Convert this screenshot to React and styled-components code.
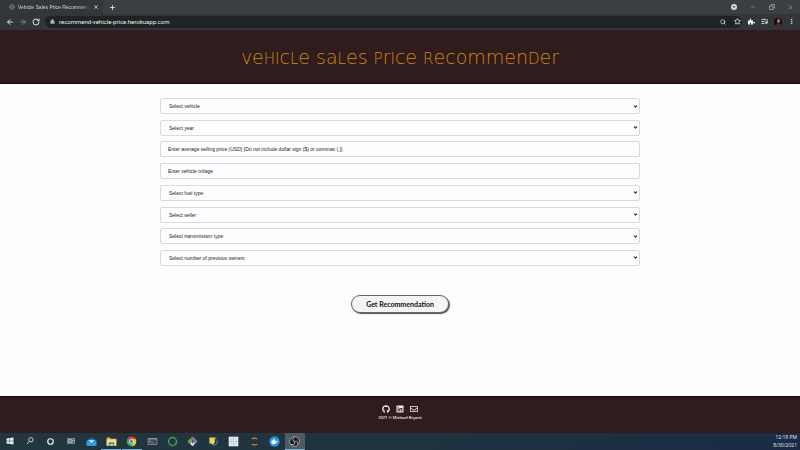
import React from "react";
import styled, { createGlobalStyle } from "styled-components";
import {
  ArrowLeft, ArrowRight, RotateCw, Lock, X, Plus, Globe, Search, Star,
  EllipsisVertical, Minus, ChevronDown, ListMusic,
} from "lucide-react";
import { FaGithub, FaLinkedin, FaRegEnvelope, FaWindows, FaPuzzlePiece } from "react-icons/fa";

const GlobalStyle = createGlobalStyle`
  * { box-sizing: border-box; }
  body { margin: 0; background: #fefdfe; font-family: "Liberation Sans", Arial, sans-serif; }
  button, input, select { font: inherit; margin: 0; }
  svg { flex-shrink: 0; }
`;

const Page = styled.div`
  min-height: 100vh;
  display: flex;
  flex-direction: column;
`;

const TabStrip = styled.div`
  height: 14px;
  display: flex;
  align-items: stretch;
  background: #3b3f43;
  color: #d4d6d8;
`;

const Tab = styled.div`
  width: 103px;
  padding: 0 4px 0 9px;
  display: flex;
  align-items: center;
  gap: 3px;
  background: #33363b;
  border-radius: 0 4px 0 0;
  font: 5px "Liberation Sans", sans-serif;
`;

const TabTitle = styled.span`
  flex: 1;
  min-width: 0;
  white-space: nowrap;
  mask-image: linear-gradient(90deg, #000 88%, transparent);
`;

const IconButton = styled.button`
  width: ${(p) => p.$width || 14}px;
  flex-shrink: 0;
  padding: 0;
  border: 0;
  display: flex;
  align-items: center;
  justify-content: center;
  background: none;
  color: ${(p) => p.$color || "#dddfe1"};
`;

const WindowControls = styled.div`
  margin-left: auto;
  display: flex;
`;

const Toolbar = styled.div`
  height: 16px;
  padding: 0 2px 1px 3px;
  display: flex;
  align-items: center;
  background: #323539;
`;

const AddressBar = styled.div`
  flex: 1;
  height: 12px;
  margin: 0 2px;
  padding: 0 0 0 5px;
  display: flex;
  align-items: center;
  gap: 4px;
  border-radius: 6px;
  background: #202226;
  color: #b9bbbe;
`;

const AddressInput = styled.input`
  flex: 1;
  min-width: 0;
  height: 12px;
  padding: 0;
  border: 0;
  outline: 0;
  background: none;
  color: #eceded;
  font: 6px Roboto, sans-serif;
`;

const Glyph = styled.svg`
  width: 8px;
  height: 8px;
`;

const Header = styled.header`
  height: 54px;
  display: flex;
  align-items: center;
  justify-content: center;
  background: #301b1d;
  border-bottom: 1px solid #140a0b;
`;

const Title = styled.h1`
  margin: 0;
  padding-top: 2px;
  color: #cb8a12;
  font: 200 19px/24px "DejaVu Sans", sans-serif;
`;

const Cap = styled.span`
  font-size: 15px;
`;

const Main = styled.main`
  flex: 1;
  padding: 14px 0 60px;
`;

const Form = styled.form`
  width: 60%;
  margin: 0 auto;
  display: flex;
  flex-direction: column;
  align-items: center;
  gap: 29px;
`;

const Fields = styled.div`
  width: 100%;
  height: 168px;
  display: grid;
  align-content: space-between;
`;

const SelectBox = styled.div`
  display: grid;
  align-items: center;

  > * { grid-area: 1 / 1; }
  > svg { justify-self: end; margin-right: 2px; pointer-events: none; color: #222; }
`;

const Select = styled.select`
  width: 100%;
  height: 16px;
  padding: 0 8px;
  appearance: none;
  border: 1px solid #d9d8da;
  border-radius: 2px;
  background: #fefdff;
  color: #222;
  font-size: 5px;
`;

const Input = styled.input`
  width: 100%;
  height: 16px;
  padding: 0 7px;
  border: 1px solid #d9d8da;
  border-radius: 2px;
  background: #fefdff;
  font-size: 5px;

  &::placeholder { color: #222; opacity: 1; }
`;

const Submit = styled.button`
  width: 98px;
  height: 18px;
  padding: 0;
  border: 1px solid #66666a;
  border-radius: 9px;
  background: #f5f4f7;
  box-shadow: 1px 1px 1px #555;
  color: #111;
  font: 700 7px Lato, sans-serif;
`;

const Footer = styled.footer`
  height: 37px;
  padding-top: 8px;
  display: flex;
  flex-direction: column;
  align-items: center;
  gap: 2px;
  border-top: 1px solid #140a0b;
  background: #301b1d;
  color: #f3eeee;
`;

const Socials = styled.div`
  display: flex;
  gap: 6px;
`;

const SocialLink = styled.a`
  display: flex;
  color: inherit;
`;

const Copyright = styled.small`
  font: 600 4px/6px "Open Sans", sans-serif;
`;

const Taskbar = styled.div`
  height: 17px;
  display: flex;
  background: linear-gradient(90deg, #21363f, #20343f 45%, #1b2a45);
  color: #e9edef;
`;

const TaskButton = styled.button`
  width: 20px;
  padding: 0;
  border: 0;
  border-bottom: 1px solid ${(p) => (p.$open ? "#71afd9" : "transparent")};
  display: flex;
  align-items: center;
  justify-content: center;
  background: ${(p) => (p.$active ? "#4c5c65" : "transparent")};
  color: inherit;

  svg { width: ${(p) => p.$size || 11}px; height: ${(p) => p.$size || 11}px; }
`;

const TaskGroup = styled.div`
  width: ${(p) => p.$width}px;
  display: flex;
  justify-content: space-between;
`;

const Clock = styled.div`
  margin-left: auto;
  padding: 0 3px 0 0;
  text-align: right;
  font: 5px/8px "Open Sans", sans-serif;
`;

const fields = [
  { label: "Select vehicle", select: true },
  { label: "Select year", select: true },
  { label: "Enter average selling price (USD) [Do not include dollar sign ($) or commas (,)]" },
  { label: "Enter vehicle milage" },
  { label: "Select fuel type", select: true },
  { label: "Select seller", select: true },
  { label: "Select transmission type", select: true },
  { label: "Select number of previous owners", select: true },
];

const systemApps = [
  { name: "Start", size: 8, icon: <FaWindows /> },
  { name: "Search", size: 10, icon: <svg viewBox="0 0 16 16" fill="none" stroke="currentColor" strokeWidth="1.3"><circle cx="9.5" cy="6" r="3.5" /><path d="M7 8.5 3 13" /></svg> },
  { name: "Cortana", icon: <svg viewBox="0 0 16 16" fill="none" stroke="currentColor" strokeWidth="1.8"><circle cx="8" cy="8" r="4" /></svg> },
  { name: "Task view", size: 10, icon: <svg viewBox="0 0 16 16" fill="none" stroke="currentColor" strokeWidth="1.2"><path d="M3 3v2h7V3M3 13v-2h7v2M3 6.5h7v3H3zM13 3v10M12 7h2" /></svg> },
];

const apps = [
  { name: "Mail", icon: <svg viewBox="0 0 16 16"><path fill="#1475bd" d="m1 6 7-4 7 4v8H1z" /><path fill="#eaf6fd" d="M3 6h10L8 10z" /><path fill="#2ca5ee" d="m1 7 7 4 7-4v7H1z" /></svg> },
  { name: "File Explorer", open: true, icon: <svg viewBox="0 0 16 16"><path fill="#e5aa35" d="M1 2h5l1 2h8v10H1z" /><path fill="#ffdc76" d="M1 5h14v9H1z" /><path fill="#348ccb" d="M4 9h8v5h-2v-2H6v2H4z" /></svg> },
  { name: "Chrome", open: true, icon: <svg viewBox="0 0 16 16"><circle cx="8" cy="8" r="7" fill="#37a853" /><path fill="#e64435" d="M8 8H4.5L2 4.4A7 7 0 0 1 14.1 4.6H8z" /><path fill="#fbc116" d="M8 4.6h6.1A7 7 0 0 1 8 15l3-5z" /><circle cx="8" cy="8" r="3.4" fill="#fff" /><circle cx="8" cy="8" r="2.5" fill="#4285f4" /></svg> },
  { name: "Terminal", icon: <svg viewBox="0 0 16 16"><path fill="#92979a" d="M1 3h14v10H1z" /><path fill="#44494c" d="M2 5h12v7H2z" /><path stroke="#c8cbcc" d="m3 7 2 1-2 1M6 10h3" fill="none" strokeWidth=".8" /></svg> },
  { name: "Anaconda", icon: <svg viewBox="0 0 16 16"><circle cx="8" cy="8" r="5.8" fill="none" stroke="#3fad49" strokeWidth="2" strokeDasharray="5 .5" /></svg> },
  { name: "Git", icon: <svg viewBox="0 0 16 16"><path fill="#dfe2df" d="m8 1 7 7-7 7-7-7z" /><path fill="#e65d43" d="m8 1 3.5 3.5L8 8 4.5 4.5z" /><path fill="#4591c7" d="m11.5 4.5L15 8l-3.5 3.5L8 8z" /><path fill="#63a65b" d="m4.5 4.5L8 8l-3.5 3.5L1 8z" /><path stroke="#333" d="m6 4 4 4M8 6v5" /></svg> },
  { name: "Python editor", icon: <svg viewBox="0 0 16 16"><path fill="#f5d145" d="M2 2h8v7L7 13l-2-2H2z" /><path fill="none" stroke="#3b7fb5" strokeWidth="1.8" d="M13 6c2 4-2 8-6 7" /><path fill="#65a65b" d="m9 1 4 2-3 2z" /></svg> },
  { name: "Calculator", icon: <svg viewBox="0 0 16 16"><path fill="#e6eef2" d="M1 1h14v14H1z" /><path stroke="#b0c5cf" fill="none" d="M4 4h8v8H4zM8 2v12M2 8h12" /></svg> },
  { name: "Jupyter", icon: <svg viewBox="0 0 16 16" fill="none" stroke="#e77d31" strokeWidth="1.8"><path d="M4 4q4-2 8 0M4 12q4 2 8 0" /></svg> },
  { name: "Docker", icon: <svg viewBox="0 0 16 16"><circle cx="8" cy="8" r="7.5" fill="#2395df" /><path fill="#f3faff" d="M3 8h7V6l2 2h2c-1 1-2 1-3 1-2 5-8 4-8-1zM4 6h5v2H4zM6 4h2v2H6z" /></svg> },
  { name: "OBS Studio", open: true, active: true, icon: <svg viewBox="0 0 16 16"><circle cx="8" cy="8" r="7" fill="#191a1e" stroke="#c9cccf" /><g fill="none" stroke="#c9cccf" strokeWidth="1.3"><path d="M8 7C4 7 5 2 8 3M8 9c3-3 6 0 4 3M7 8c3 3 0 6-4 4" /></g></svg> },
];

function Field({ label, select }) {
  if (!select) return <Input type="text" placeholder={label} aria-label={label} />;
  return (
    <SelectBox>
      <Select aria-label={label}><option>{label}</option></Select>
      <ChevronDown size={5} strokeWidth={5} />
    </SelectBox>
  );
}

function AppButton({ app }) {
  return (
    <TaskButton type="button" aria-label={app.name} $open={app.open} $active={app.active} $size={app.size}>
      {app.icon}
    </TaskButton>
  );
}

export default function App() {
  return (
    <>
      <GlobalStyle />
      <Page>
        <TabStrip>
          <Tab>
            <Globe size={6} color="#85898d" />
            <TabTitle>Vehicle Sales Price Recommender</TabTitle>
            <IconButton type="button" aria-label="Close tab" $width={6}><X size={6} strokeWidth={3} /></IconButton>
          </Tab>
          <IconButton type="button" aria-label="New tab" $width={19}><Plus size={7} strokeWidth={3} /></IconButton>
          <WindowControls>
            <IconButton type="button" aria-label="Search tabs" $width={19}>
              <Glyph viewBox="0 0 16 16"><circle cx="8" cy="8" r="6" fill="#d5d7d9" /><path d="M5 6.5h6L8 10z" fill="#3b3f43" /></Glyph>
            </IconButton>
            <IconButton type="button" aria-label="Minimize" $width={19} $color="#989b9e"><Minus size={6} /></IconButton>
            <IconButton type="button" aria-label="Restore" $width={19} $color="#a5a8aa">
              <Glyph viewBox="0 0 16 16" fill="none" stroke="currentColor" strokeWidth="1.5"><path d="M3 6h7v7H3zM6 6V3h7v7h-3" /></Glyph>
            </IconButton>
            <IconButton type="button" aria-label="Close window" $width={19} $color="#a5a8aa"><X size={7} /></IconButton>
          </WindowControls>
        </TabStrip>
        <Toolbar>
          <IconButton type="button" aria-label="Back" $width={13}><ArrowLeft size={8} strokeWidth={3} /></IconButton>
          <IconButton type="button" aria-label="Forward" $color="#85888b" $width={13}><ArrowRight size={8} strokeWidth={3} /></IconButton>
          <IconButton type="button" aria-label="Reload"><RotateCw size={8} strokeWidth={3} /></IconButton>
          <AddressBar>
            <Lock size={5} fill="#b9bbbe" />
            <AddressInput aria-label="Address" defaultValue="recommend-vehicle-price.herokuapp.com" />
            <IconButton type="button" aria-label="Zoom" $width={10}><Search size={6} strokeWidth={3} /></IconButton>
            <IconButton type="button" aria-label="Bookmark" $width={10}><Star size={7} strokeWidth={3} /></IconButton>
          </AddressBar>
          <IconButton type="button" aria-label="Extensions" $color="#fff"><FaPuzzlePiece size={7} /></IconButton>
          <IconButton type="button" aria-label="Media controls" $width={13}><ListMusic size={7} strokeWidth={3} /></IconButton>
          <IconButton type="button" aria-label="Profile" $width={13}>
            <Glyph viewBox="0 0 16 16"><circle cx="8" cy="8" r="8" fill="#160f10" /><ellipse cx="9" cy="6" rx="3" ry="4" fill="#a87967" /><path fill="#632b2e" d="M5 11h7l1 3q-5 3-9 0z" /></Glyph>
          </IconButton>
          <IconButton type="button" aria-label="Menu"><EllipsisVertical size={7} strokeWidth={3} /></IconButton>
        </Toolbar>
        <Header>
          <Title aria-label="Vehicle Sales Price Recommender">
            ve<Cap>HI</Cap>c<Cap>L</Cap>e sa<Cap>L</Cap>es <Cap>P</Cap>r<Cap>I</Cap>ce <Cap>R</Cap>ecommen<Cap>D</Cap>er
          </Title>
        </Header>
        <Main>
          <Form onSubmit={(event) => event.preventDefault()}>
            <Fields>{fields.map((field) => <Field key={field.label} {...field} />)}</Fields>
            <Submit type="submit">Get Recommendation</Submit>
          </Form>
        </Main>
        <Footer>
          <Socials>
            <SocialLink href="#github" aria-label="GitHub"><FaGithub size={8} /></SocialLink>
            <SocialLink href="#linkedin" aria-label="LinkedIn"><FaLinkedin size={8} /></SocialLink>
            <SocialLink href="#email" aria-label="Email"><FaRegEnvelope size={8} /></SocialLink>
          </Socials>
          <Copyright>2021 © Michael Bryant</Copyright>
        </Footer>
        <Taskbar>
          <TaskGroup $width={81}>{systemApps.map((app) => <AppButton key={app.name} app={app} />)}</TaskGroup>
          <TaskGroup $width={224}>{apps.map((app) => <AppButton key={app.name} app={app} />)}</TaskGroup>
          <Clock>12:18 PM<br />8/30/2021</Clock>
        </Taskbar>
      </Page>
    </>
  );
}
